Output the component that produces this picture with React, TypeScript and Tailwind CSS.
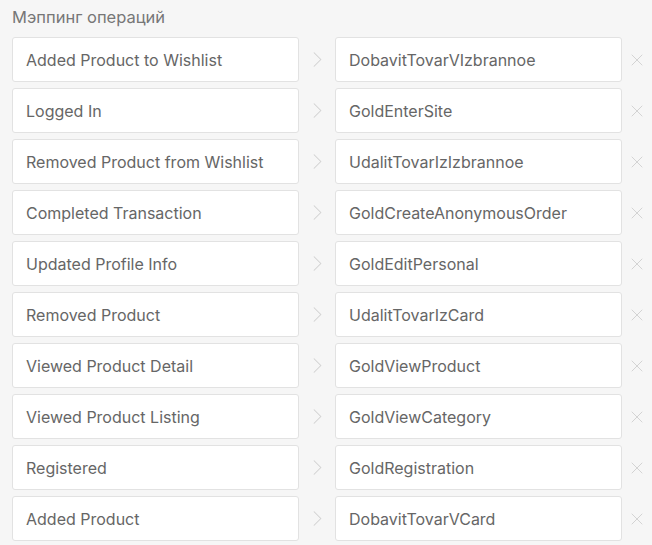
import { ChevronRight, X } from 'lucide-react'

// ─── Data ─────────────────────────────────────────────────────
const mappings: [string, string][] = [
  ['Added Product to Wishlist', 'DobavitTovarVIzbrannoe'],
  ['Logged In', 'GoldEnterSite'],
  ['Removed Product from Wishlist', 'UdalitTovarIzIzbrannoe'],
  ['Completed Transaction', 'GoldCreateAnonymousOrder'],
  ['Updated Profile Info', 'GoldEditPersonal'],
  ['Removed Product', 'UdalitTovarIzCard'],
  ['Viewed Product Detail', 'GoldViewProduct'],
  ['Viewed Product Listing', 'GoldViewCategory'],
  ['Registered', 'GoldRegistration'],
  ['Added Product', 'DobavitTovarVCard'],
]

const Field = ({ value }: { value: string }) => (
  <div className="w-[287px] h-[45px] flex items-center px-[13px] bg-white border border-[#e2e2e2] rounded-[3px] text-[16px] text-[#666] truncate">
    {value}
  </div>
)

export default function App() {
  return (
    <div
      className="w-[652px] h-[545px] overflow-hidden bg-[#f6f6f6] pl-3 pt-[6px]"
      style={{ fontFamily: 'Inter, "Noto Sans", sans-serif' }}
    >
      <p className="text-[16.5px] leading-[22px] text-[#777] mb-[9px]">Мэппинг операций</p>

      <div className="flex flex-col gap-[6px]">
        {mappings.map(([from, to]) => (
          <div key={from} className="flex items-center">
            <Field value={from} />
            <div className="w-[36px] flex justify-center text-[#d0d0d0]">
              <ChevronRight size={27} strokeWidth={0.9} />
            </div>
            <Field value={to} />
            <div className="w-[30px] flex justify-center text-[#d0d0d0]">
              <X size={20} strokeWidth={1.1} />
            </div>
          </div>
        ))}
      </div>
    </div>
  )
}
